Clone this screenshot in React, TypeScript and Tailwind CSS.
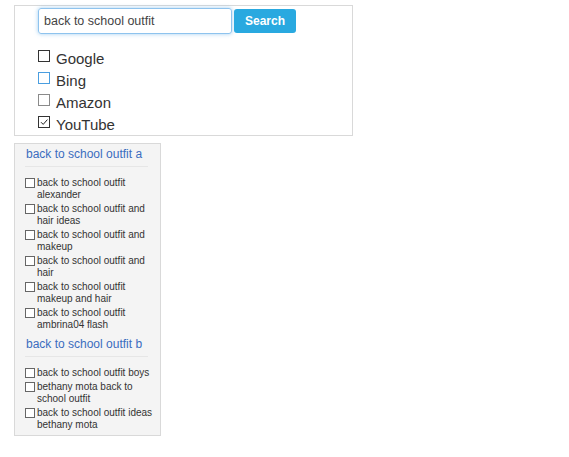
import React from 'react';

type Engine = { name: string; state: 'plain' | 'hover' | 'light' | 'checked' };

const engines: Engine[] = [
  { name: 'Google', state: 'plain' },
  { name: 'Bing', state: 'hover' },
  { name: 'Amazon', state: 'light' },
  { name: 'YouTube', state: 'checked' },
];

const groups = [
  {
    title: 'back to school outfit a',
    items: [
      ['back to school outfit', 'alexander'],
      ['back to school outfit and', 'hair ideas'],
      ['back to school outfit and', 'makeup'],
      ['back to school outfit and', 'hair'],
      ['back to school outfit', 'makeup and hair'],
      ['back to school outfit', 'ambrina04 flash'],
    ],
  },
  {
    title: 'back to school outfit b',
    items: [
      ['back to school outfit boys'],
      ['bethany mota back to', 'school outfit'],
      ['back to school outfit ideas', 'bethany mota'],
    ],
  },
];

const EngineBox = ({ state }: { state: Engine['state'] }) => {
  const border =
    state === 'hover'
      ? 'border-[#4a9ee0]'
      : state === 'light'
      ? 'border-[#8a8a8a]'
      : 'border-[#333333]';
  return (
    <span className={`relative inline-block w-[12px] h-[12px] border bg-white shrink-0 ${border}`}>
      {state === 'checked' && (
        <svg viewBox="0 0 10 10" className="absolute inset-0 w-[10px] h-[10px]">
          <path d="M2 5.2 L4.2 7.4 L8.4 2.6" fill="none" stroke="#222" strokeWidth="1" />
        </svg>
      )}
    </span>
  );
};

export default function App() {
  return (
    <div className="pt-[5px] pl-[14px] font-['Liberation_Sans',Arial,sans-serif] text-[#333]">
      <div className="w-[339px] h-[131px] border border-[#d9d9d9] bg-white pl-[23px] pt-[2px]">
        <div className="flex items-center gap-[2px]">
          <div className="w-[194px] h-[26px] border border-[#8ec3ee] rounded-[3px] shadow-[0_0_4px_rgba(102,175,233,0.6)] flex items-center pl-[5px] text-[12.5px] text-[#444]">
            back to school outfit
          </div>
          <button className="w-[62px] h-[24px] rounded-[3px] bg-[#29a9e0] text-white text-[12px] font-bold">
            Search
          </button>
        </div>
        <div className="mt-[11px] flex flex-col">
          {engines.map((e) => (
            <div key={e.name} className="flex items-center h-[22px] gap-[6px]">
              <EngineBox state={e.state} />
              <span className="text-[15px] text-[#333] leading-none mt-[4px]">{e.name}</span>
            </div>
          ))}
        </div>
      </div>

      <div className="mt-[7px] w-[147px] h-[293px] border border-[#d9d9d9] bg-[#f4f4f4] pl-[10px] pr-[4px] pt-[2px]">
        {groups.map((g, gi) => (
          <div key={g.title} className={gi > 0 ? 'mt-[5px]' : ''}>
            <div className="text-[12px] text-[#3b6dbf] leading-[16px] pl-[1px]">{g.title}</div>
            <div className="mt-[4px] mr-[8px] border-t border-[#e6e6e6]" />
            <div className="mt-[10px] flex flex-col gap-[2px]">
              {g.items.map((lines, i) => (
                <div key={i} className="flex items-start gap-[2px]">
                  <span className="mt-[1px] w-[10px] h-[10px] border border-[#666] bg-white shrink-0" />
                  <div className="text-[10px] leading-[12px] text-[#333]">
                    {lines.map((l, j) => (
                      <div key={j}>{l}</div>
                    ))}
                  </div>
                </div>
              ))}
            </div>
          </div>
        ))}
      </div>
    </div>
  );
}
